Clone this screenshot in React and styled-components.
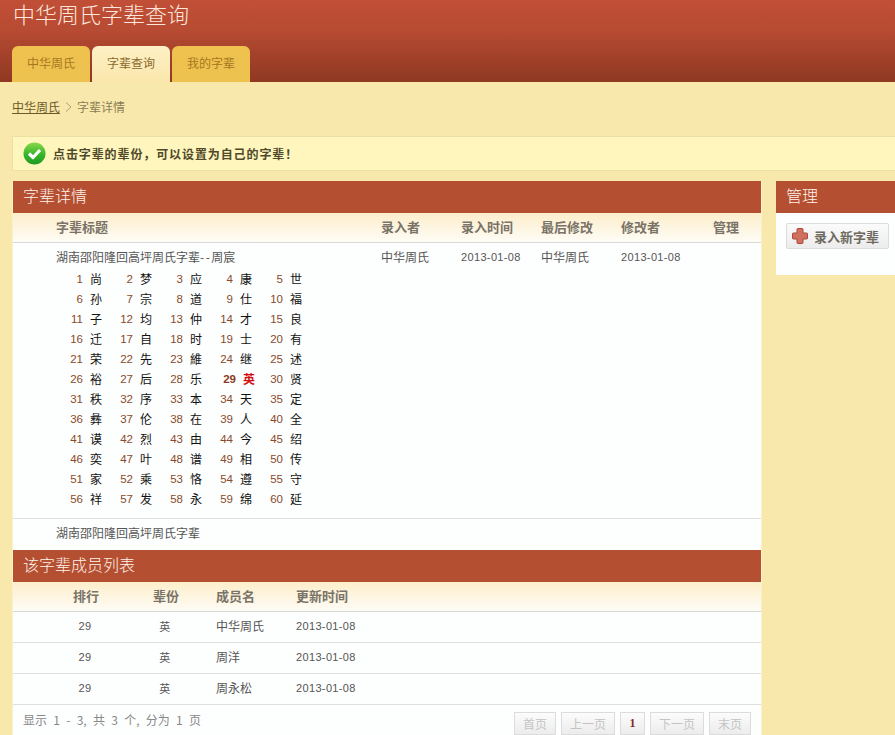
import React from 'react';
import styled, { createGlobalStyle } from 'styled-components';

const cjk = `"Noto Sans CJK SC", "Liberation Sans", sans-serif`;
const latin = `"Liberation Sans", "Noto Sans CJK SC", sans-serif`;

const GlobalStyle = createGlobalStyle`
  html, body {
    margin: 0;
    padding: 0;
    height: 735px;
    overflow: hidden;
    background: #f9e8ab;
  }
  body {
    font-family: ${cjk};
    font-size: 12px;
    color: #555;
  }
  * { box-sizing: border-box; }
`;

const Page = styled.div`
  width: 100%;
  height: 735px;
  overflow: hidden;
`;

const Header = styled.header`
  height: 82px;
  padding: 0 12px;
  background: linear-gradient(to bottom, #c14f37 0%, #b84b33 35%, #8f3822 100%);
  display: flex;
  flex-direction: column;
  justify-content: flex-end;
`;

const SiteTitle = styled.h1`
  margin: 0 0 20px 1px;
  font-size: 22px;
  line-height: 26px;
  font-weight: 300;
  color: #fbe6dc;
`;

const Tabs = styled.nav`
  display: flex;
  gap: 2px;
`;

const Tab = styled.a`
  width: 78px;
  height: 36px;
  line-height: 34px;
  text-align: center;
  font-size: 12px;
  border-radius: 6px 6px 0 0;
  color: ${p => (p.$active ? '#8a6a2c' : '#a5781f')};
  background: ${p =>
    p.$active
      ? 'linear-gradient(to bottom, #fdf0c6, #fbe7ac)'
      : 'linear-gradient(to bottom, #efc14f, #edc24f)'};
`;

const Content = styled.main`
  padding: 0 0 0 12px;
`;

const Crumbs = styled.div`
  height: 54px;
  padding-bottom: 5px;
  display: flex;
  align-items: center;
  gap: 5px;
  font-size: 12px;
  color: #8a7d55;
`;

const CrumbLink = styled.a`
  color: #6b5a2a;
  text-decoration: underline;
`;

const Notice = styled.div`
  height: 35px;
  display: flex;
  align-items: center;
  gap: 7px;
  padding-left: 10px;
  background: #fef6bd;
  border: 1px solid #ece0a6;
  border-right: 0;
  font-size: 12px;
  font-weight: 700;
  color: #50482a;
  letter-spacing: 0.9px;
`;

const Columns = styled.div`
  display: flex;
  gap: 14px;
  margin-top: 10px;
  align-items: flex-start;
`;

const MainPanel = styled.section`
  flex: 0 0 750px;
  background: #fdfefe;
  border-left: 1px solid #fbf1c8;
  border-right: 1px solid #fbf1c8;
`;

const SidePanel = styled.aside`
  flex: 1;
  background: #fdfefe;
  height: 94px;
`;

const PanelTitle = styled.h2`
  margin: 0;
  height: 32px;
  line-height: 29px;
  padding-left: 10px;
  font-size: 16px;
  font-weight: 300;
  color: #fdf3ea;
  background: #b54f32;
`;

const Row = styled.div`
  display: grid;
  grid-template-columns: ${p => p.$cols};
  padding-left: ${p => p.$indent};
  border-bottom: 1px solid #dfdfdc;
`;

const HeadRow = styled(Row)`
  height: 30px;
  padding-bottom: 2px;
  align-items: center;
  font-size: 13px;
  font-weight: 700;
  color: #7a7368;
  background: linear-gradient(to bottom, #fdeecb, #fefcf6);
  border-bottom: 1px solid #d8d8d4;
`;

const DetailRow = styled(Row)`
  height: 276px;
  padding-top: 6px;
  line-height: 16px;
  color: #555;
`;

const Dash = styled.span`
  letter-spacing: 1.5px;
`;

const DateCell = styled.span`
  font-family: ${latin};
  font-size: 11px;
  letter-spacing: 0.35px;
  color: #555;
`;

const GenGrid = styled.div`
  margin-top: 4px;
  display: grid;
  grid-template-columns: repeat(5, 50px);
  grid-auto-rows: 20px;
`;

const Gen = styled.div`
  display: grid;
  grid-template-columns: ${p => (p.$on ? '30px' : '27px')} 12px;
  column-gap: 7px;
  align-items: center;
`;

const GenNo = styled.span`
  text-align: right;
  font-family: ${latin};
  font-size: 11.5px;
  font-weight: ${p => (p.$on ? 700 : 400)};
  color: ${p => (p.$on ? '#8a3a1a' : '#8a4a2a')};
`;

const GenChar = styled.span`
  color: ${p => (p.$on ? '#d01010' : '#111')};
  font-weight: ${p => (p.$on ? 700 : 400)};
  font-size: 12px;
`;

const NoteRow = styled.div`
  height: 31px;
  line-height: 27px;
  padding-left: 43px;
  color: #555;
`;

const MemberRow = styled(Row)`
  height: 31px;
  padding-bottom: 3px;
  align-items: center;
  color: #555;
`;

const RankCell = styled.span`
  width: 24px;
  text-align: center;
  font-family: ${latin};
  font-size: 11px;
  letter-spacing: 0.35px;
`;

const Footer = styled.div`
  height: 31px;
  padding: 0 10px 0 10px;
  display: flex;
  align-items: center;
  justify-content: space-between;
`;

const Summary = styled.span`
  color: #888;
  font-size: 12px;
  word-spacing: 3.6px;
  padding-bottom: 2px;
`;

const Pager = styled.div`
  display: flex;
  gap: 5px;
  margin-top: 6px;
`;

const PageBtn = styled.span`
  height: 23px;
  line-height: 21px;
  width: ${p => p.$w}px;
  text-align: center;
  font-size: 12px;
  border: 1px solid #dcdcdc;
  color: ${p => (p.$on ? '#8a2a1a' : '#c4c4c4')};
  font-weight: ${p => (p.$on ? 700 : 400)};
  font-family: ${p => (p.$on ? '"Liberation Serif", serif' : 'inherit')};
  background: linear-gradient(to bottom, #fcfcfc, #ececec);
`;

const SideBody = styled.div`
  padding: 10px;
`;

const AddButton = styled.a`
  width: 103px;
  height: 26px;
  display: flex;
  align-items: center;
  gap: 6px;
  padding-left: 5px;
  border: 1px solid #dcdcdc;
  border-radius: 2px;
  font-size: 13px;
  font-weight: 700;
  color: #6f6a60;
  background: linear-gradient(to bottom, #fbfbfb, #ececec);
`;

const names = '尚梦应康世孙宗道仕福子均仲才良迁自时士有荣先維继述裕后乐英贤秩序本天定彝伦在人全谟烈由今绍奕叶谱相传家乘恪遵守祥发永绵延';

const CheckIcon = () => (
  <svg width="23" height="23" viewBox="0 0 23 23">
    <defs>
      <linearGradient id="ok" x1="0" y1="0" x2="0" y2="1">
        <stop offset="0" stopColor="#8ad84a" />
        <stop offset="0.55" stopColor="#35b52a" />
        <stop offset="1" stopColor="#1f9a22" />
      </linearGradient>
    </defs>
    <circle cx="11.5" cy="11.5" r="11" fill="url(#ok)" />
    <path d="M6 11.5l4 4 7-7.5" fill="none" stroke="#fff" strokeWidth="3.2" strokeLinejoin="round" />
  </svg>
);

const PlusIcon = () => (
  <svg width="16" height="16" viewBox="0 0 16 16">
    <path
      d="M6 .5h4a1 1 0 0 1 1 1V5h3.5a1 1 0 0 1 1 1v4a1 1 0 0 1-1 1H11v3.5a1 1 0 0 1-1 1H6a1 1 0 0 1-1-1V11H1.500a1 1 0 0 1-1-1V6a1 1 0 0 1 1-1H5V1.500a1 1 0 0 1 1-1z"
      fill="#d2705f"
      stroke="#a84a3a"
    />
  </svg>
);

const Chevron = () => (
  <svg width="7" height="10" viewBox="0 0 7 10">
    <path d="M1 .5L6 5 1 9.500" fill="none" stroke="#a8a080" />
  </svg>
);

const detailCols = '325px 80px 80px 80px 92px 1fr';
const memberCols = '80px 63px 80px 1fr';
const members = ['中华周氏', '周洋', '周永松'];

const App = () => (
  <Page>
    <GlobalStyle />
    <Header>
      <SiteTitle>中华周氏字辈查询</SiteTitle>
      <Tabs>
        <Tab>中华周氏</Tab>
        <Tab $active>字辈查询</Tab>
        <Tab>我的字辈</Tab>
      </Tabs>
    </Header>
    <Content>
      <Crumbs>
        <CrumbLink>中华周氏</CrumbLink>
        <Chevron />
        <span>字辈详情</span>
      </Crumbs>
      <Notice>
        <CheckIcon />
        点击字辈的辈份，可以设置为自己的字辈！
      </Notice>
      <Columns>
        <MainPanel>
          <PanelTitle>字辈详情</PanelTitle>
          <HeadRow $cols={detailCols} $indent="43px">
            <span>字辈标题</span>
            <span>录入者</span>
            <span>录入时间</span>
            <span>最后修改</span>
            <span>修改者</span>
            <span>管理</span>
          </HeadRow>
          <DetailRow $cols={detailCols} $indent="43px">
            <div>
              湖南邵阳隆回高坪周氏字辈<Dash>--</Dash>周宸
              <GenGrid>
                {[...names].map((c, i) => (
                  <Gen key={i} $on={i === 28}>
                    <GenNo $on={i === 28}>{i + 1}</GenNo>
                    <GenChar $on={i === 28}>{c}</GenChar>
                  </Gen>
                ))}
              </GenGrid>
            </div>
            <span>中华周氏</span>
            <DateCell>2013-01-08</DateCell>
            <span>中华周氏</span>
            <DateCell>2013-01-08</DateCell>
          </DetailRow>
          <NoteRow>湖南邵阳隆回高坪周氏字辈</NoteRow>
          <PanelTitle>该字辈成员列表</PanelTitle>
          <HeadRow $cols={memberCols} $indent="60px">
            <span>排行</span>
            <span>辈份</span>
            <span>成员名</span>
            <span>更新时间</span>
          </HeadRow>
          {members.map(m => (
            <MemberRow key={m} $cols={memberCols} $indent="60px">
              <RankCell>29</RankCell>
              <RankCell>英</RankCell>
              <span>{m}</span>
              <DateCell>2013-01-08</DateCell>
            </MemberRow>
          ))}
          <Footer>
            <Summary>显示 1 - 3, 共 3 个, 分为 1 页</Summary>
            <Pager>
              <PageBtn $w={42}>首页</PageBtn>
              <PageBtn $w={54}>上一页</PageBtn>
              <PageBtn $w={25} $on>1</PageBtn>
              <PageBtn $w={54}>下一页</PageBtn>
              <PageBtn $w={42}>末页</PageBtn>
            </Pager>
          </Footer>
        </MainPanel>
        <SidePanel>
          <PanelTitle>管理</PanelTitle>
          <SideBody>
            <AddButton>
              <PlusIcon />
              录入新字辈
            </AddButton>
          </SideBody>
        </SidePanel>
      </Columns>
    </Content>
  </Page>
);

export default App;
